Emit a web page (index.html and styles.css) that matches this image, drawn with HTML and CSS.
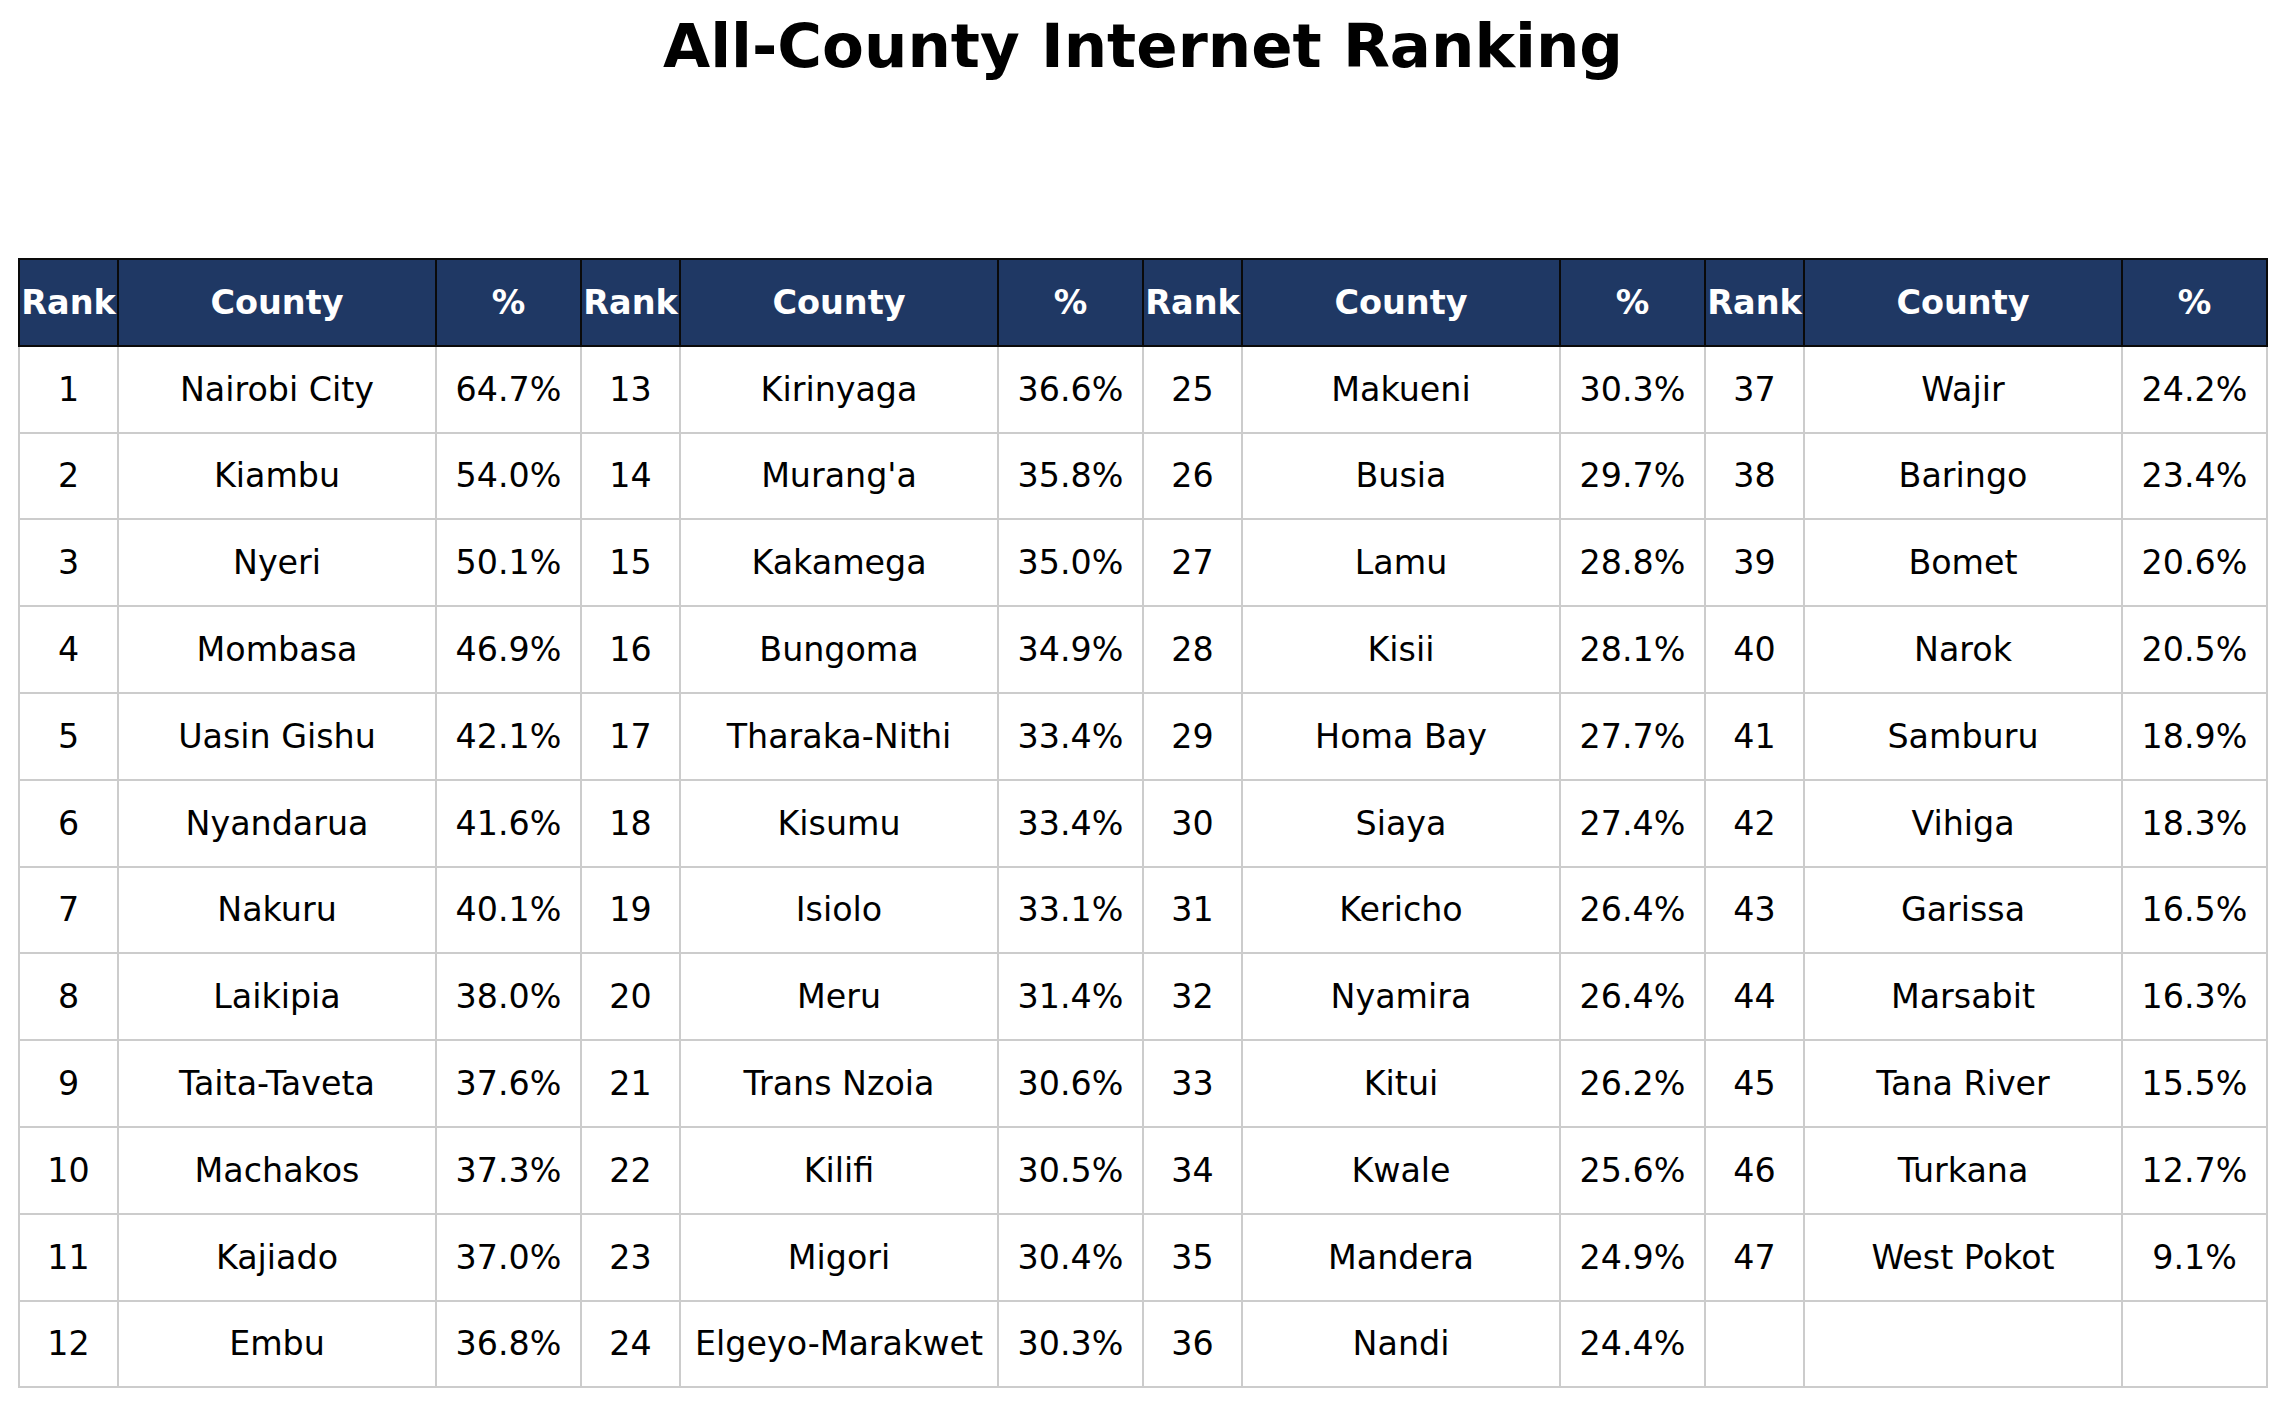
FILE: index.html
```html
<!DOCTYPE html>
<html lang="en">
<head>
<meta charset="utf-8">
<title>All-County Internet Ranking</title>
<link rel="stylesheet" href="styles.css">
</head>
<body>
<div class="page">
  <h1 class="title">All-County Internet Ranking</h1>
  <table class="ranking">
    <colgroup>
      <col class="c-rank"><col class="c-county"><col class="c-pct">
      <col class="c-rank"><col class="c-county"><col class="c-pct">
      <col class="c-rank"><col class="c-county"><col class="c-pct">
      <col class="c-rank"><col class="c-county"><col class="c-pct">
    </colgroup>
    <thead>
      <tr>
        <th>Rank</th><th>County</th><th>%</th>
        <th>Rank</th><th>County</th><th>%</th>
        <th>Rank</th><th>County</th><th>%</th>
        <th>Rank</th><th>County</th><th>%</th>
      </tr>
    </thead>
    <tbody>
      <tr><td>1</td><td>Nairobi City</td><td>64.7%</td><td>13</td><td>Kirinyaga</td><td>36.6%</td><td>25</td><td>Makueni</td><td>30.3%</td><td>37</td><td>Wajir</td><td>24.2%</td></tr>
      <tr><td>2</td><td>Kiambu</td><td>54.0%</td><td>14</td><td>Murang'a</td><td>35.8%</td><td>26</td><td>Busia</td><td>29.7%</td><td>38</td><td>Baringo</td><td>23.4%</td></tr>
      <tr><td>3</td><td>Nyeri</td><td>50.1%</td><td>15</td><td>Kakamega</td><td>35.0%</td><td>27</td><td>Lamu</td><td>28.8%</td><td>39</td><td>Bomet</td><td>20.6%</td></tr>
      <tr><td>4</td><td>Mombasa</td><td>46.9%</td><td>16</td><td>Bungoma</td><td>34.9%</td><td>28</td><td>Kisii</td><td>28.1%</td><td>40</td><td>Narok</td><td>20.5%</td></tr>
      <tr><td>5</td><td>Uasin Gishu</td><td>42.1%</td><td>17</td><td>Tharaka-Nithi</td><td>33.4%</td><td>29</td><td>Homa Bay</td><td>27.7%</td><td>41</td><td>Samburu</td><td>18.9%</td></tr>
      <tr><td>6</td><td>Nyandarua</td><td>41.6%</td><td>18</td><td>Kisumu</td><td>33.4%</td><td>30</td><td>Siaya</td><td>27.4%</td><td>42</td><td>Vihiga</td><td>18.3%</td></tr>
      <tr><td>7</td><td>Nakuru</td><td>40.1%</td><td>19</td><td>Isiolo</td><td>33.1%</td><td>31</td><td>Kericho</td><td>26.4%</td><td>43</td><td>Garissa</td><td>16.5%</td></tr>
      <tr><td>8</td><td>Laikipia</td><td>38.0%</td><td>20</td><td>Meru</td><td>31.4%</td><td>32</td><td>Nyamira</td><td>26.4%</td><td>44</td><td>Marsabit</td><td>16.3%</td></tr>
      <tr><td>9</td><td>Taita-Taveta</td><td>37.6%</td><td>21</td><td>Trans Nzoia</td><td>30.6%</td><td>33</td><td>Kitui</td><td>26.2%</td><td>45</td><td>Tana River</td><td>15.5%</td></tr>
      <tr><td>10</td><td>Machakos</td><td>37.3%</td><td>22</td><td>Kilifi</td><td>30.5%</td><td>34</td><td>Kwale</td><td>25.6%</td><td>46</td><td>Turkana</td><td>12.7%</td></tr>
      <tr><td>11</td><td>Kajiado</td><td>37.0%</td><td>23</td><td>Migori</td><td>30.4%</td><td>35</td><td>Mandera</td><td>24.9%</td><td>47</td><td>West Pokot</td><td>9.1%</td></tr>
      <tr><td>12</td><td>Embu</td><td>36.8%</td><td>24</td><td>Elgeyo-Marakwet</td><td>30.3%</td><td>36</td><td>Nandi</td><td>24.4%</td><td></td><td></td><td></td></tr>
    </tbody>
  </table>
</div>
</body>
</html>
```

FILE: styles.css
```css
html, body {
  margin: 0;
  padding: 0;
  background: #ffffff;
}

.page {
  width: 2286px;
  padding-top: 11px;
  font-family: "DejaVu Sans", "Liberation Sans", sans-serif;
  color: #000000;
}

.title {
  margin: 0;
  text-align: center;
  font-size: 61px;
  font-weight: bold;
  line-height: 70px;
}

.ranking {
  margin: 177px auto 0 auto;
  width: 2248px;
  table-layout: fixed;
  border-collapse: collapse;
  font-size: 33.3px;
}

.c-rank { width: 99px; }
.c-county { width: 318px; }
.c-pct { width: 145px; }

.ranking tr {
  height: 86.8px;
}

.ranking th,
.ranking td {
  padding: 0;
  text-align: center;
  vertical-align: middle;
  line-height: normal;
  white-space: nowrap;
  overflow: visible;
}

.ranking th {
  background: #1f3864;
  color: #ffffff;
  font-weight: bold;
  font-size: 33.5px;
  border: 2px solid #0a0a0a;
}

.ranking td {
  border: 2px solid #cccccc;
  font-weight: normal;
}
```
